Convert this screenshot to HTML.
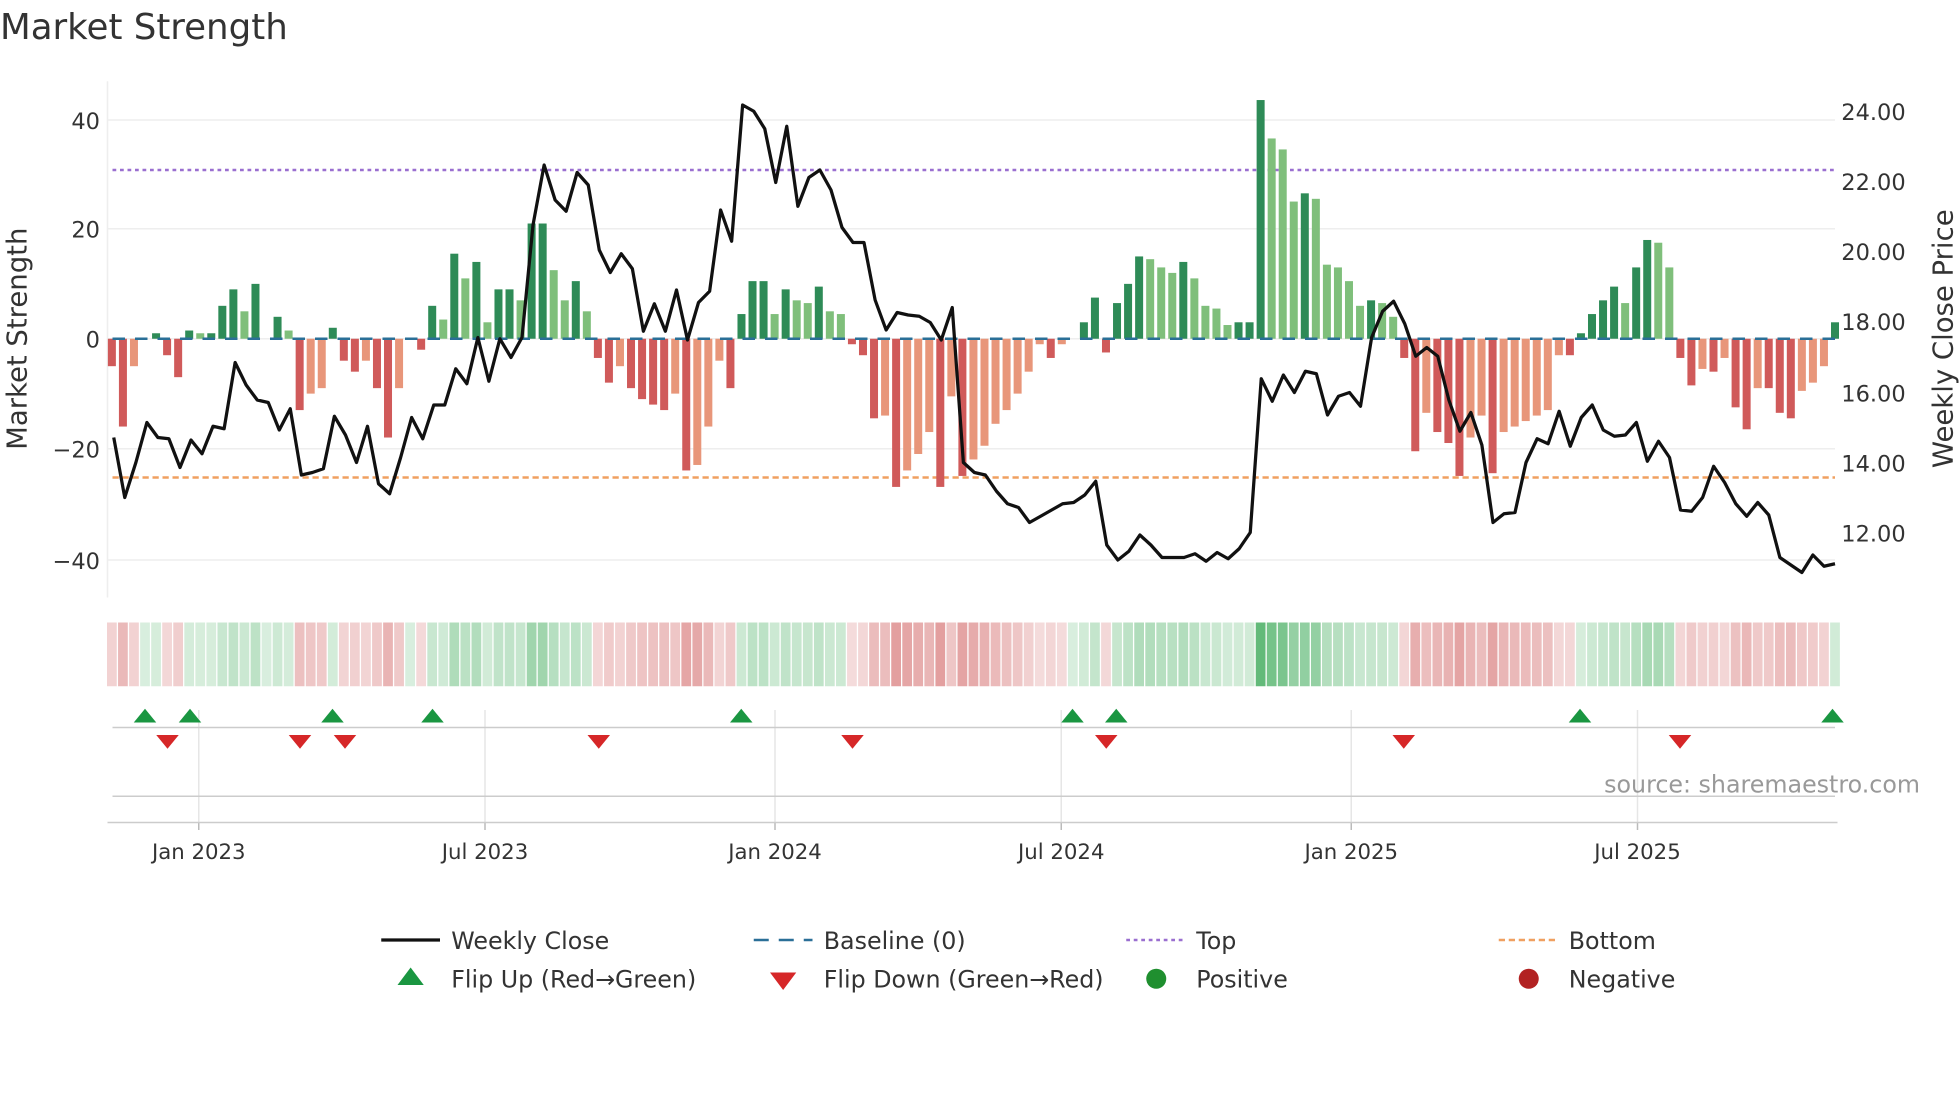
<!DOCTYPE html>
<html><head><meta charset="utf-8"><style>
html,body{margin:0;padding:0;background:#fff;width:1960px;height:1102px;overflow:hidden}
svg{display:block}
text{font-family:"DejaVu Sans","Liberation Sans",sans-serif;fill:#333}
</style></head><body>
<svg id="s" width="1960" height="1102.5" viewBox="0 0 1568 882" xmlns="http://www.w3.org/2000/svg">
<text x="0" y="31" font-size="28.5">Market Strength</text>
<g id="grid"></g>
<line x1="86" y1="65" x2="86" y2="478" stroke="#eee" stroke-width="1.2"/>
<line x1="90" y1="136" x2="1468" y2="136" stroke="#9a6fd0" stroke-width="2" stroke-dasharray="3,3"/>
<line x1="90" y1="382" x2="1468" y2="382" stroke="#f0a060" stroke-width="2" stroke-dasharray="5,3"/>
<g id="bars"></g>
<line x1="90" y1="271" x2="1468" y2="271" stroke="#2a6f97" stroke-width="2" stroke-dasharray="10,8"/>
<polyline id="price" fill="none" stroke="#111" stroke-width="2.6" stroke-linejoin="round"/>
<g font-size="18">
<text x="80" y="103" text-anchor="end">40</text>
<text x="80" y="190" text-anchor="end">20</text>
<text x="80" y="278" text-anchor="end">0</text>
<text x="80" y="366" text-anchor="end">−20</text>
<text x="80" y="455" text-anchor="end">−40</text>
<text x="1473" y="96">24.00</text>
<text x="1473" y="152">22.00</text>
<text x="1473" y="208">20.00</text>
<text x="1473" y="264">18.00</text>
<text x="1473" y="321">16.00</text>
<text x="1473" y="377">14.00</text>
<text x="1473" y="433">12.00</text>
</g>
<text transform="translate(21,271) rotate(-90)" text-anchor="middle" font-size="22">Market Strength</text>
<text transform="translate(1562,271) rotate(-90)" text-anchor="middle" font-size="22">Weekly Close Price</text>
<g id="heat"></g>
<g id="lower"></g>
<line x1="90" y1="582" x2="1468" y2="582" stroke="#ccc" stroke-width="1.2"/>
<line x1="90" y1="637" x2="1468" y2="637" stroke="#ccc" stroke-width="1.2"/>
<line x1="86" y1="658" x2="1470" y2="658" stroke="#ccc" stroke-width="1.2"/>
<g id="flips"></g>
<text x="1536" y="634" text-anchor="end" font-size="19" style="fill:#999">source: sharemaestro.com</text>
<g font-size="17" text-anchor="middle">
<text x="159" y="687">Jan 2023</text><text x="388" y="687">Jul 2023</text><text x="620" y="687">Jan 2024</text>
<text x="849" y="687">Jul 2024</text><text x="1081" y="687">Jan 2025</text><text x="1310" y="687">Jul 2025</text>
</g>
<g font-size="19">
<line x1="305" y1="752" x2="352" y2="752" stroke="#111" stroke-width="2.6"/><text x="361" y="759">Weekly Close</text>
<line x1="603" y1="752" x2="650" y2="752" stroke="#2a6f97" stroke-width="2" stroke-dasharray="12,8"/><text x="659" y="759">Baseline (0)</text>
<line x1="901" y1="752" x2="948" y2="752" stroke="#9a6fd0" stroke-width="2" stroke-dasharray="3,3"/><text x="957" y="759">Top</text>
<line x1="1199" y1="752" x2="1246" y2="752" stroke="#f0a060" stroke-width="2" stroke-dasharray="5,3"/><text x="1255" y="759">Bottom</text>
<polygon points="318,788 339,788 328.5,774" fill="#1a9641"/><text x="361" y="790">Flip Up (Red→Green)</text>
<polygon points="616,778 637,778 626.5,792" fill="#d62728"/><text x="659" y="790">Flip Down (Green→Red)</text>
<circle cx="925" cy="783" r="8" fill="#1f8f2f"/><text x="957" y="790">Positive</text>
<circle cx="1223" cy="783" r="8" fill="#b22222"/><text x="1255" y="790">Negative</text>
</g>
</svg>
<script>
var NS="http://www.w3.org/2000/svg";
function el(p,t,a){var e=document.createElementNS(NS,t);for(var k in a)e.setAttribute(k,a[k]);document.getElementById(p).appendChild(e);return e;}
[96,183,271,359,448].forEach(function(y){el("grid","line",{x1:86,x2:1468,y1:y,y2:y,stroke:"#eee","stroke-width":1.2});});
[159,388,620,849,1081,1310].forEach(function(x){el("lower","line",{x1:x,x2:x,y1:568,y2:658,stroke:"#e6e6e6","stroke-width":1.2});el("lower","line",{x1:x,x2:x,y1:658,y2:664,stroke:"#bbb","stroke-width":1.2});});
var v=[-5,-16,-5,0,1,-3,-7,1.5,1,1,6,9,5,10,0,4,1.5,-13,-10,-9,2,-4,-6,-4,-9,-18,-9,0,-2,6,3.5,15.5,11,14,3,9,9,7,21,21,12.5,7,10.5,5,-3.5,-8,-5,-9,-11,-12,-13,-10,-24,-23,-16,-4,-9,4.5,10.5,10.5,4.5,9,7,6.5,9.5,5,4.5,-1,-3,-14.5,-14,-27,-24,-21,-17,-27,-10.5,-25,-22,-19.5,-15.5,-13,-10,-6,-1,-3.5,-1,0,3,7.5,-2.5,6.5,10,15,14.5,13,12,14,11,6,5.5,2.5,3,3,43.5,36.5,34.5,25,26.5,25.5,13.5,13,10.5,6,7,6.5,4,-3.5,-20.5,-13.5,-17,-19,-25,-18,-14,-24.5,-17,-16,-15,-14,-13,-3,-3,1,4.5,7,9.5,6.5,13,18,17.5,13,-3.5,-8.5,-5.5,-6,-3.5,-12.5,-16.5,-9,-9,-13.5,-14.5,-9.5,-8,-5,3];
var n=v.length,x0=89.5,st=(1468-89.5)/(n-1),k=4.39;
for(var i=0;i<n;i++){var x=x0+i*st,val=v[i],pv=i?v[i-1]:0;
 var dark=Math.abs(val)>=Math.abs(pv)||(val*pv<0);
 var c=val>=0?(dark?"#2e8b57":"#7fbf7b"):(dark?"#d05a5a":"#e8967a");
 if(Math.abs(val)>0.2){var h=Math.abs(val)*k;el("bars","rect",{x:x-3.2,width:6.4,y:val>0?271-h:271,height:h,fill:c});}
 var a=Math.min(0.85,0.18+Math.abs(val)/40*0.5);
 var hc=val>=0?"rgba(40,160,70,"+a+")":"rgba(200,70,70,"+a+")";
 el("heat","rect",{x:x-3.9,width:7.8,y:498,height:51,fill:hc});
}
var py=[350,398,370,338,350,351,374,352,363,341,343,290,308,320,322,344,327,380,378,375,333,348,370,341,387,395,366,334,351,324,324,295,307,270,305,271,286,270,180,132,160,169,138,148,200,218,203,215,265,243,265,232,272,242,233,168,193,84,89,103,146,101,165,142,136,152,182,194,194,240,264,250,252,253,258,272,246,370,378,380,393,403,406,418,413,408,403,402,396,385,436,448,441,428,436,446,446,446,443,449,442,447,439,426,303,321,300,314,297,299,332,317,314,325,270,249,241,259,285,278,285,320,345,330,356,418,411,410,370,351,355,329,357,334,324,344,349,348,338,369,353,366,408,409,398,373,386,403,413,402,412,446,452,458,444,453,451];
var pts=[];for(var j=0;j<py.length;j++)pts.push((x0+1.5+j*(1468-91)/(py.length-1)).toFixed(1)+","+py[j]);
document.getElementById("price").setAttribute("points",pts.join(" "));
[116,152,266,346,593,858,893,1264,1466].forEach(function(x){el("flips","polygon",{points:(x-9)+",578 "+(x+9)+",578 "+x+",567",fill:"#1a9641"});});
[134,240,276,479,682,885,1123,1344].forEach(function(x){el("flips","polygon",{points:(x-9)+",588 "+(x+9)+",588 "+x+",599",fill:"#d62728"});});
</script>
</body></html>
